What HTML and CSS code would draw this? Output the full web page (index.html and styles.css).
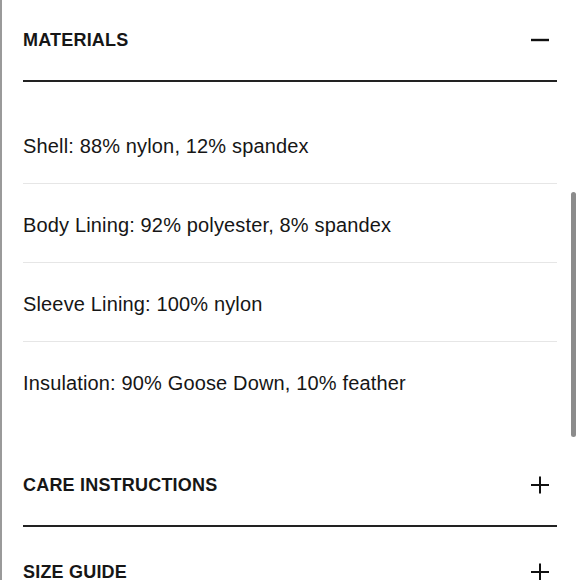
FILE: index.html
```html
<!DOCTYPE html>
<html lang="en">
<head>
<meta charset="utf-8">
<title>Product details</title>
<link rel="stylesheet" href="styles.css">
</head>
<body>
<div class="frame">
  <div class="panel">
    <section class="acc acc-open">
      <div class="acc-head">
        <span class="acc-title">MATERIALS</span>
        <svg class="acc-icon" width="18" height="18" viewBox="0 0 18 18"><line x1="0" y1="9" x2="18" y2="9" stroke="#111" stroke-width="2.4"/></svg>
      </div>
      <ul class="acc-body">
        <li class="row">Shell: 88% nylon, 12% spandex</li>
        <li class="row">Body Lining: 92% polyester, 8% spandex</li>
        <li class="row">Sleeve Lining: 100% nylon</li>
        <li class="row">Insulation: 90% Goose Down, 10% feather</li>
      </ul>
    </section>
    <section class="acc">
      <div class="acc-head">
        <span class="acc-title">CARE INSTRUCTIONS</span>
        <svg class="acc-icon" width="18" height="18" viewBox="0 0 18 18"><line x1="0" y1="9" x2="18" y2="9" stroke="#111" stroke-width="2"/><line x1="9" y1="0.5" x2="9" y2="17.5" stroke="#111" stroke-width="2"/></svg>
      </div>
    </section>
    <section class="acc">
      <div class="acc-head">
        <span class="acc-title">SIZE GUIDE</span>
        <svg class="acc-icon" width="18" height="18" viewBox="0 0 18 18"><line x1="0" y1="9" x2="18" y2="9" stroke="#111" stroke-width="2"/><line x1="9" y1="0.5" x2="9" y2="17.5" stroke="#111" stroke-width="2"/></svg>
      </div>
    </section>
  </div>
  <div class="scrollbar"></div>
</div>
</body>
</html>
```

FILE: styles.css
```css
html, body {
  margin: 0;
  padding: 0;
  background: #ffffff;
  height: 100%;
  overflow: hidden;
}

.frame {
  position: relative;
  height: 580px;
  border-left: 2px solid #9a9a9a;
  box-sizing: border-box;
  overflow: hidden;
  font-family: "Liberation Sans", Arial, sans-serif;
  color: #161616;
}

.panel {
  margin-top: -5px;
  padding: 0 23px 0 21px;
}

.acc-head {
  display: flex;
  align-items: center;
  justify-content: space-between;
  padding: 34px 8px 29px 0;
  line-height: 22px;
  border-bottom: 2px solid #222222;
}

.acc-title {
  font-size: 18px;
  font-weight: 700;
  letter-spacing: 0.2px;
}

.acc-icon {
  display: block;
}

.acc-body {
  list-style: none;
  margin: 0;
  padding: 23px 0 20px;
}

.row {
  font-size: 20px;
  line-height: 26px;
  letter-spacing: 0.15px;
  padding: 28px 0 24px;
  border-bottom: 1px solid #e6e6e6;
}

.row:last-child {
  border-bottom: none;
}

.scrollbar {
  position: absolute;
  right: 4px;
  top: 192px;
  width: 5px;
  height: 245px;
  border-radius: 3px;
  background: #8c8c8c;
}
```
